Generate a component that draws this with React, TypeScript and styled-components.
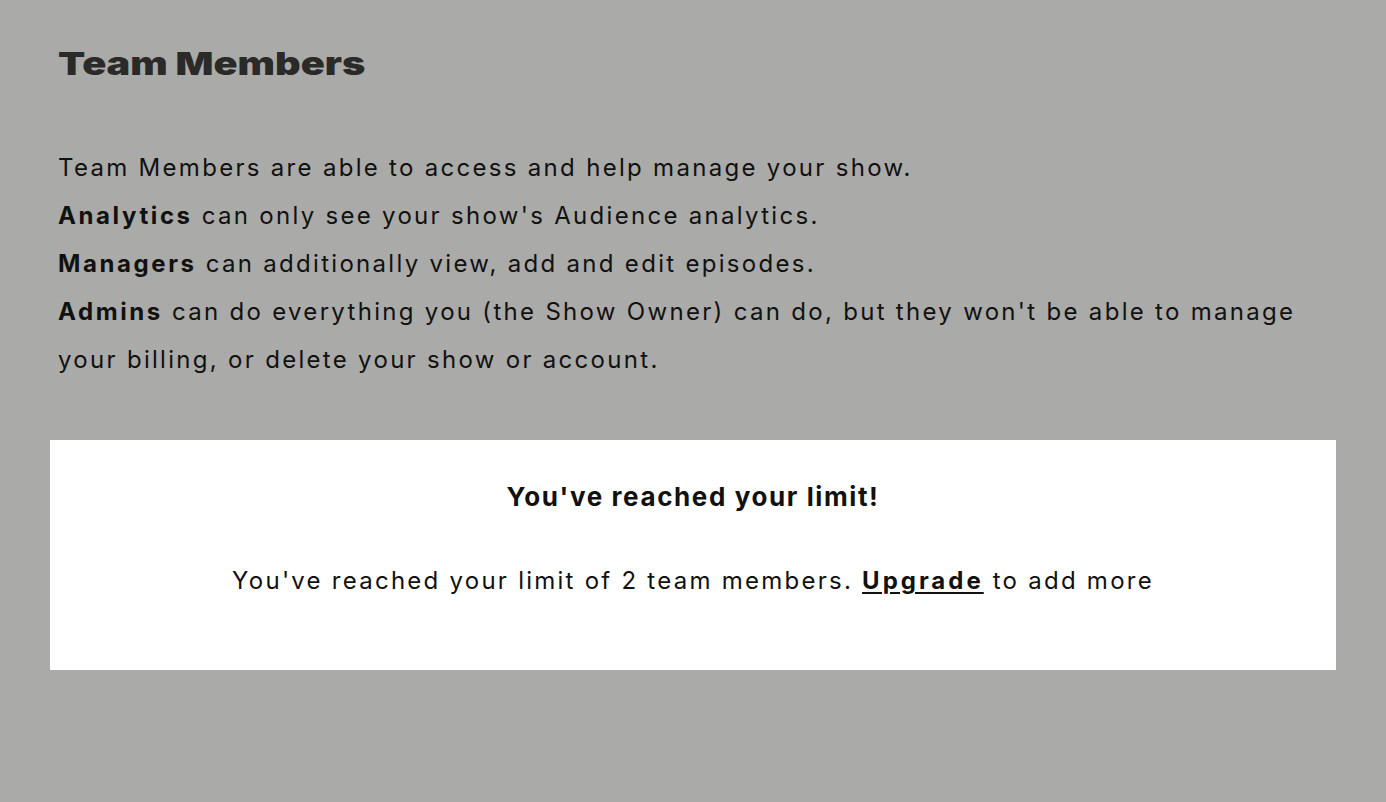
import styled, { createGlobalStyle } from "styled-components";

const GlobalStyle = createGlobalStyle`
  html, body {
    margin: 0;
    padding: 0;
    background: #aaaaa9;
  }
  body {
    font-family: Inter, "Liberation Sans", Arial, sans-serif;
    color: #111110;
  }
`

const Page = styled.div`
  width: 1386px;
  height: 802px;
  overflow: hidden;
  background: #aaaaa9;
`

const Content = styled.div`
  padding: 44px 58px 0 58px;
`

const Heading = styled.h1`
  margin: 0;
  font-family: Inter, "Liberation Sans", Arial, sans-serif;
  font-weight: 900;
  font-size: 32px;
  line-height: 40px;
  color: #2a2a28;
  transform: scaleX(1.24);
  transform-origin: left center;
  white-space: nowrap;
`

const Intro = styled.div`
  margin-top: 60px;
  font-size: 24px;
  line-height: 48px;
  letter-spacing: 2.3px;
  color: #111110;
`

const Line = styled.div``

const Strong = styled.b`
  font-weight: 700;
  letter-spacing: 2.6px;
`

const Notice = styled.div`
  margin: 56px 50px 0 50px;
  height: 230px;
  background: #fefffe;
  display: flex;
  flex-direction: column;
  align-items: center;
  padding-top: 40px;
  box-sizing: border-box;
`

const NoticeTitle = styled.div`
  font-weight: 700;
  font-size: 26px;
  line-height: 34px;
  letter-spacing: 1.6px;
  color: #111110;
`

const NoticeText = styled.div`
  margin-top: 50px;
  font-size: 24px;
  line-height: 34px;
  letter-spacing: 2.25px;
  color: #111110;

  a {
    font-weight: 700;
    color: #111110;
    text-decoration: underline;
    text-underline-offset: 3px;
    letter-spacing: 3px;
  }
`

export default function App() {
  return (
    <>
      <GlobalStyle />
      <Page>
        <Content>
          <Heading>Team Members</Heading>
          <Intro>
            <Line>Team Members are able to access and help manage your show.</Line>
            <Line><Strong>Analytics</Strong> can only see your show's Audience analytics.</Line>
            <Line><Strong>Managers</Strong> can additionally view, add and edit episodes.</Line>
            <Line>
              <Strong>Admins</Strong> can do everything you (the Show Owner) can do, but they won't be able to manage
              your billing, or delete your show or account.
            </Line>
          </Intro>
        </Content>
        <Notice>
          <NoticeTitle>You've reached your limit!</NoticeTitle>
          <NoticeText>
            You've reached your limit of 2 team members. <a href="#">Upgrade</a> to add more
          </NoticeText>
        </Notice>
      </Page>
    </>
  )
}
